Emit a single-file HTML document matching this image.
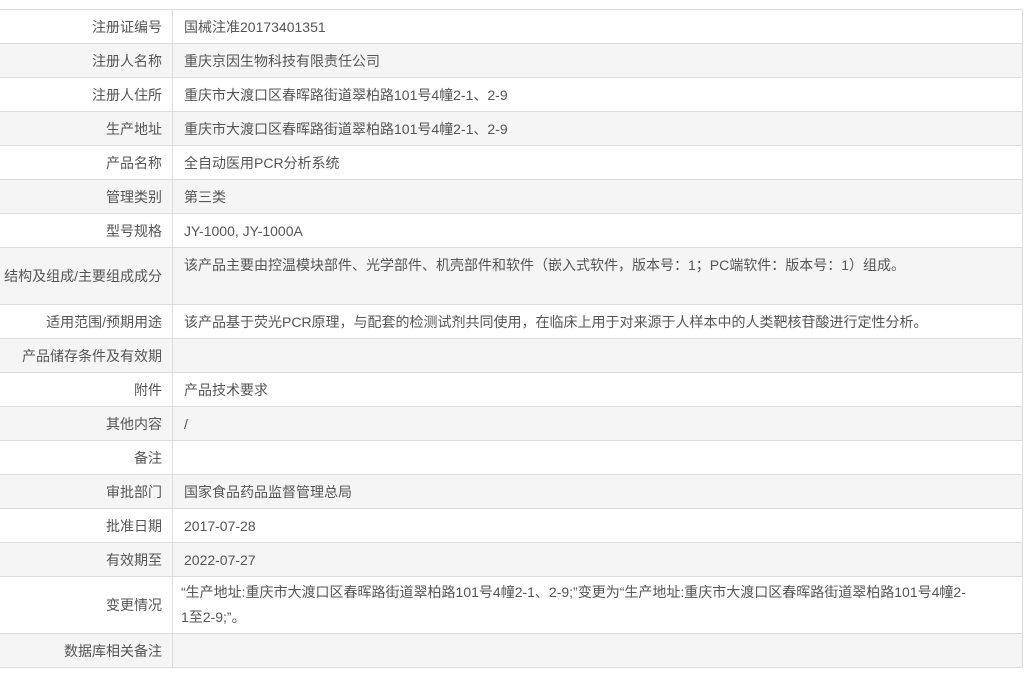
<!DOCTYPE html>
<html><head><meta charset="utf-8"><style>
body{margin:0;background:#fff;font-family:"Liberation Sans","Noto Sans CJK SC",sans-serif;font-size:14px;color:#555;}
.t{position:absolute;left:0;top:9px;width:1022px;border-top:1px solid #ddd;border-right:1px solid #ddd;}
.r{display:flex;border-bottom:1px solid #ddd;height:33px;box-sizing:content-box;}
.r.g{background:#f5f5f5;}
.l{width:162px;padding-right:10px;text-align:right;border-right:1px solid #ddd;display:flex;align-items:center;justify-content:flex-end;flex:none;white-space:nowrap;}
.v{padding-left:11px;display:flex;align-items:center;flex:1;line-height:22px;}
.top .v{align-items:flex-start;}
</style></head><body>
<div class="t">
<div class="r"><div class="l">注册证编号</div><div class="v">国械注准20173401351</div></div>
<div class="r g"><div class="l">注册人名称</div><div class="v">重庆京因生物科技有限责任公司</div></div>
<div class="r"><div class="l">注册人住所</div><div class="v">重庆市大渡口区春晖路街道翠柏路101号4幢2-1、2-9</div></div>
<div class="r g"><div class="l">生产地址</div><div class="v">重庆市大渡口区春晖路街道翠柏路101号4幢2-1、2-9</div></div>
<div class="r"><div class="l">产品名称</div><div class="v">全自动医用PCR分析系统</div></div>
<div class="r g"><div class="l">管理类别</div><div class="v">第三类</div></div>
<div class="r"><div class="l">型号规格</div><div class="v">JY-1000, JY-1000A</div></div>
<div class="r g top" style="height:56px"><div class="l">结构及组成/主要组成成分</div><div class="v" style="padding-top:6px">该产品主要由控温模块部件、光学部件、机壳部件和软件（嵌入式软件，版本号：1；PC端软件：版本号：1）组成。</div></div>
<div class="r"><div class="l">适用范围/预期用途</div><div class="v">该产品基于荧光PCR原理，与配套的检测试剂共同使用，在临床上用于对来源于人样本中的人类靶核苷酸进行定性分析。</div></div>
<div class="r g"><div class="l">产品储存条件及有效期</div><div class="v"></div></div>
<div class="r"><div class="l">附件</div><div class="v">产品技术要求</div></div>
<div class="r g"><div class="l">其他内容</div><div class="v">/</div></div>
<div class="r"><div class="l">备注</div><div class="v"></div></div>
<div class="r g"><div class="l">审批部门</div><div class="v">国家食品药品监督管理总局</div></div>
<div class="r"><div class="l">批准日期</div><div class="v">2017-07-28</div></div>
<div class="r g"><div class="l">有效期至</div><div class="v">2022-07-27</div></div>
<div class="r" style="height:56px"><div class="l">变更情况</div><div class="v" style="padding-right:4px;padding-left:8px;line-height:25px">“生产地址:重庆市大渡口区春晖路街道翠柏路101号4幢2-1、2-9;”变更为“生产地址:重庆市大渡口区春晖路街道翠柏路101号4幢2-<br>1至2-9;”。</div></div>
<div class="r g"><div class="l">数据库相关备注</div><div class="v"></div></div>
</div>
</body></html>
